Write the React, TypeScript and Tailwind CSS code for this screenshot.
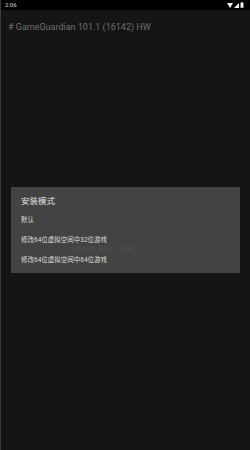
import React from "react";

export default function App() {
  return (
    <div className="w-[250px] h-[450px] bg-[#151515] border-l-[1px] border-[#3a3a3a] flex flex-col relative overflow-hidden" style={{ fontFamily: 'Roboto, "Noto Sans CJK SC", sans-serif' }}>
      <div className="h-[10px] bg-black flex items-center justify-between px-[4px] shrink-0">
        <span className="text-[6px] leading-none text-[#ddd]">2:06</span>
        <div className="flex items-center gap-[1px] pr-[2px]">
          <svg width="6" height="5" viewBox="0 0 6 5"><path d="M0 0 H6 L3 5 Z" fill="#eee" /></svg>
          <svg width="5" height="5" viewBox="0 0 5 5"><path d="M5 0 V5 H0 Z" fill="#eee" /></svg>
          <svg width="4" height="6" viewBox="0 0 4 6"><rect x="0.5" y="0.8" width="3" height="5" fill="#eee" /><rect x="1.3" y="0" width="1.4" height="1" fill="#eee" /></svg>
        </div>
      </div>
      <div className="pl-[7px] pt-[12px] text-[9px] leading-[10px] text-[#6f6f6f]">
        # GameGuardian 101.1 (16142) HW
      </div>
      <div className="mt-[155px] mx-[10px] bg-[#434343] h-[86px] pl-[10px] pt-[9px] relative">
        <div className="text-[8.5px] leading-[10px] text-[#e6e6e6]">安装模式</div>
        <div className="mt-[10px] text-[6.5px] leading-[8px] text-[#dcdcdc]">默认</div>
        <div className="mt-[12px] text-[6.5px] leading-[8px] text-[#dcdcdc]">修改64位虚拟空间中32位游戏</div>
        <div className="mt-[12px] text-[6.5px] leading-[8px] text-[#dcdcdc]">修改64位虚拟空间中64位游戏</div>
        <div className="absolute left-[61px] top-[57px] text-[10px] font-bold leading-[10px] text-[#4b4b4b] tracking-[0.5px]">www.kkx.net</div>
      </div>
    </div>
  );
}
